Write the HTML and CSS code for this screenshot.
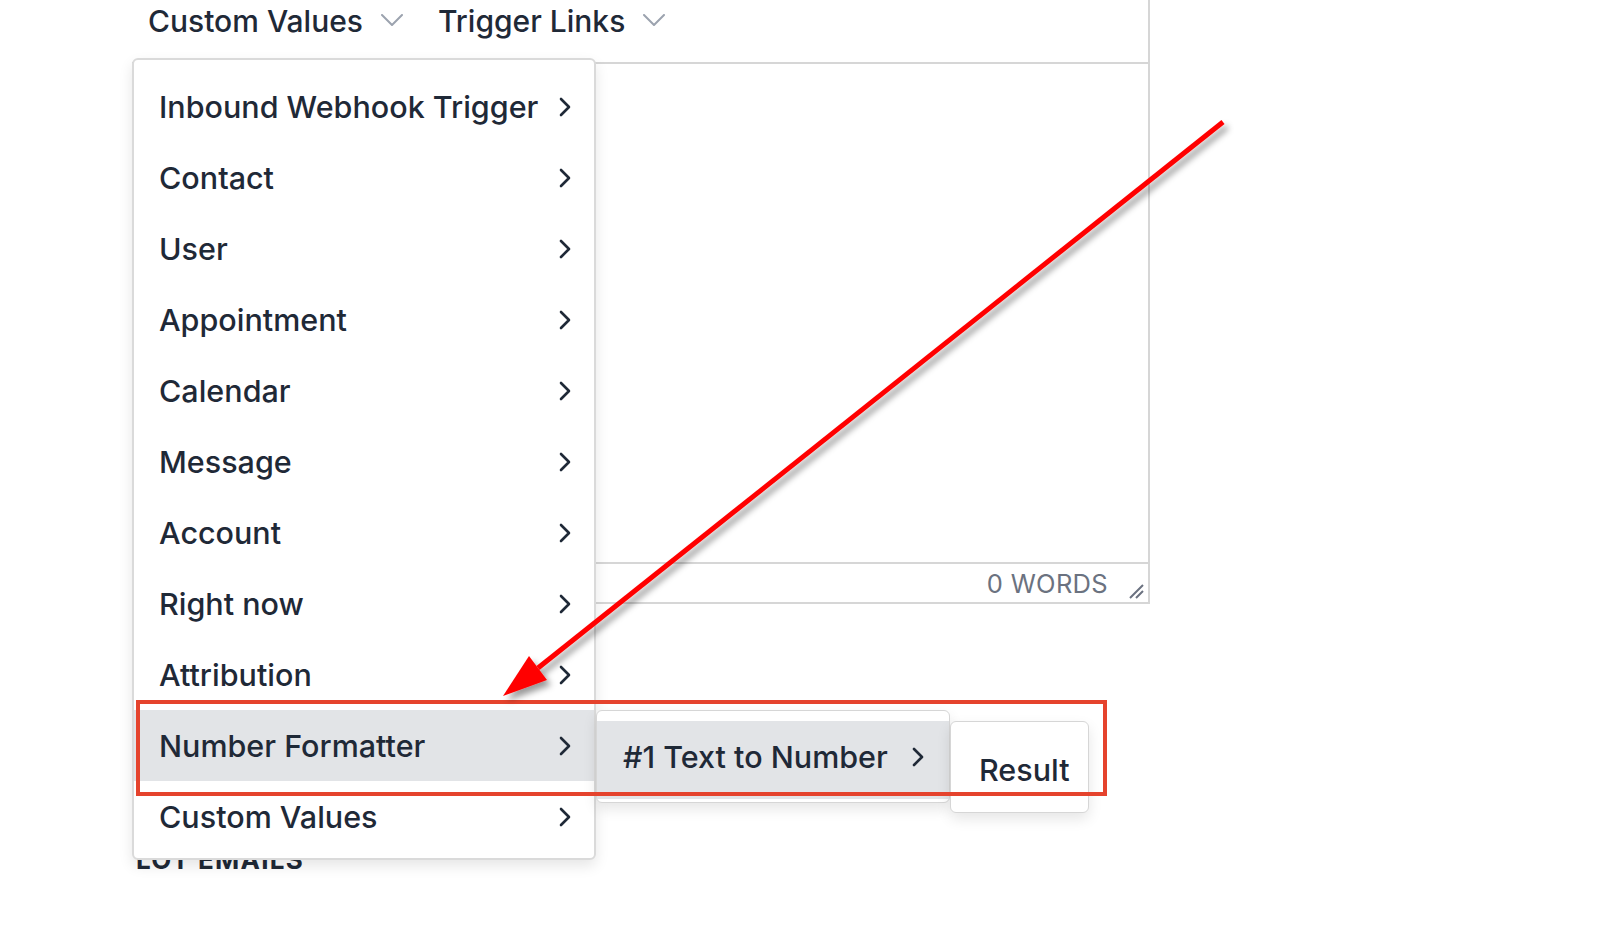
FILE: index.html
```html
<!DOCTYPE html>
<html lang="en">
<head>
<meta charset="utf-8">
<title>Custom Values menu</title>
<link rel="stylesheet" href="styles.css">
</head>
<body>
<div class="page">
  <div class="editor">
    <div class="toolbar">
      <div class="tb-item"><span>Custom Values</span><svg class="caret" viewBox="0 0 22 12"><path d="M1 1 L11 11 L21 1"/></svg></div>
      <div class="tb-item"><span>Trigger Links</span><svg class="caret" viewBox="0 0 22 12"><path d="M1 1 L11 11 L21 1"/></svg></div>
    </div>
    <div class="editor-body"></div>
    <div class="editor-foot">
      <span class="words">0 WORDS</span>
      <svg class="grip" viewBox="0 0 16 16"><path d="M2 15 L15 2 M8 15 L15 8"/></svg>
    </div>
  </div>
  <div class="section-label">LOT EMAILS</div>

  <div class="menu">
    <div class="mi"><span>Inbound Webhook Trigger</span><svg class="chev" viewBox="0 0 14 22"><path d="M3 3 L11 11 L3 19"/></svg></div>
    <div class="mi"><span>Contact</span><svg class="chev" viewBox="0 0 14 22"><path d="M3 3 L11 11 L3 19"/></svg></div>
    <div class="mi"><span>User</span><svg class="chev" viewBox="0 0 14 22"><path d="M3 3 L11 11 L3 19"/></svg></div>
    <div class="mi"><span>Appointment</span><svg class="chev" viewBox="0 0 14 22"><path d="M3 3 L11 11 L3 19"/></svg></div>
    <div class="mi"><span>Calendar</span><svg class="chev" viewBox="0 0 14 22"><path d="M3 3 L11 11 L3 19"/></svg></div>
    <div class="mi"><span>Message</span><svg class="chev" viewBox="0 0 14 22"><path d="M3 3 L11 11 L3 19"/></svg></div>
    <div class="mi"><span>Account</span><svg class="chev" viewBox="0 0 14 22"><path d="M3 3 L11 11 L3 19"/></svg></div>
    <div class="mi"><span>Right now</span><svg class="chev" viewBox="0 0 14 22"><path d="M3 3 L11 11 L3 19"/></svg></div>
    <div class="mi"><span>Attribution</span><svg class="chev" viewBox="0 0 14 22"><path d="M3 3 L11 11 L3 19"/></svg></div>
    <div class="mi active"><span>Number Formatter</span><svg class="chev" viewBox="0 0 14 22"><path d="M3 3 L11 11 L3 19"/></svg></div>
    <div class="mi"><span>Custom Values</span><svg class="chev" viewBox="0 0 14 22"><path d="M3 3 L11 11 L3 19"/></svg></div>
  </div>

  <div class="submenu sub1">
    <div class="si active"><span>#1 Text to Number</span><svg class="chev" viewBox="0 0 14 22"><path d="M3 3 L11 11 L3 19"/></svg></div>
  </div>
  <div class="submenu sub2">
    <div class="si"><span>Result</span></div>
  </div>

  <div class="annot-rect"></div>
  <svg class="arrow" viewBox="0 0 1600 947">
    <defs>
      <filter id="sh" x="-10%" y="-10%" width="130%" height="130%">
        <feDropShadow dx="4" dy="5" stdDeviation="3" flood-color="#000" flood-opacity="0.4"/>
      </filter>
    </defs>
    <g filter="url(#sh)">
      <line x1="1223" y1="122" x2="538" y2="668" stroke="#ff0000" stroke-width="5"/>
      <polygon points="503,696 547,680 529,656" fill="#ff0000"/>
    </g>
  </svg>
</div>
</body>
</html>
```

FILE: styles.css
```css
html, body {
  margin: 0;
  padding: 0;
  background: #ffffff;
}

body {
  font-family: "Inter", "Noto Sans", sans-serif;
  color: #1f2937;
}

.page {
  position: relative;
  width: 1600px;
  height: 947px;
  overflow: hidden;
  background: #ffffff;
}

.editor {
  box-sizing: border-box;
  margin-left: 132px;
  width: 1018px;
  height: 604px;
  border-right: 2px solid #d6d6d6;
  border-bottom: 2px solid #d6d6d6;
  display: flex;
  flex-direction: column;
}

.toolbar {
  box-sizing: border-box;
  height: 64px;
  border-bottom: 2px solid #d6d6d6;
  display: flex;
  align-items: flex-start;
  padding: 3px 0 0 16px;
  gap: 35px;
}

.tb-item {
  display: flex;
  align-items: center;
  gap: 18px;
  font-size: 30px;
  font-weight: 500;
  line-height: 36px;
  color: #1f2937;
}

.caret {
  width: 22px;
  height: 12px;
  margin-top: -3px;
  fill: none;
  stroke: #9ca3af;
  stroke-width: 2;
  stroke-linecap: round;
  stroke-linejoin: round;
}

.editor-body {
  flex: 1;
}

.editor-foot {
  box-sizing: border-box;
  height: 40px;
  border-top: 2px solid #d6d6d6;
  display: flex;
  align-items: center;
  justify-content: flex-end;
  padding-right: 4px;
  gap: 20px;
}

.words {
  font-size: 25.5px;
  color: #6b7280;
  letter-spacing: 0.3px;
}

.grip {
  width: 16px;
  height: 16px;
  align-self: flex-end;
  margin-bottom: 3px;
  fill: none;
  stroke: #6b7280;
  stroke-width: 2;
}

.section-label {
  margin: 241px 0 0 136px;
  font-size: 26px;
  line-height: 30px;
  font-weight: 700;
  letter-spacing: 1.3px;
  color: #1f2937;
}

.menu {
  position: absolute;
  left: 132px;
  top: 58px;
  box-sizing: border-box;
  width: 464px;
  height: 802px;
  padding: 11px 0 10px;
  background: #ffffff;
  border: 2px solid #dadada;
  border-radius: 6px;
  box-shadow: 0 6px 14px rgba(0, 0, 0, 0.10);
}

.mi {
  display: flex;
  align-items: center;
  justify-content: space-between;
  height: 71px;
  padding: 0 22px 0 25px;
  font-size: 30.5px;
  font-weight: 500;
  color: #1f2937;
}

.mi.active {
  background: #e2e4e7;
}

.chev {
  width: 14px;
  height: 22px;
  fill: none;
  stroke: #1f2937;
  stroke-width: 2.6;
  stroke-linecap: round;
  stroke-linejoin: round;
}

.submenu {
  position: absolute;
  box-sizing: border-box;
  background: #ffffff;
  border: 1.5px solid #d6d6d6;
  border-radius: 6px;
  box-shadow: 0 6px 14px rgba(0, 0, 0, 0.10);
}

.sub1 {
  left: 596px;
  top: 710px;
  width: 354px;
  height: 93px;
  padding: 10px 0 3px;
}

.sub2 {
  left: 950px;
  top: 721px;
  width: 139px;
  height: 92px;
  padding: 10px 0 0;
}

.si {
  box-sizing: border-box;
  display: flex;
  align-items: center;
  gap: 23px;
  height: 78px;
  padding: 0 24px 7px 26px;
  font-size: 30.5px;
  font-weight: 500;
  color: #1f2937;
}

.sub2 .si {
  height: 74px;
  padding: 0 0 0 28px;
}

.si.active {
  background: #e2e4e7;
}

.annot-rect {
  position: absolute;
  left: 136px;
  top: 700px;
  width: 971px;
  height: 96px;
  box-sizing: border-box;
  border: 4px solid #e5432d;
}

.arrow {
  position: absolute;
  left: 0;
  top: 0;
  width: 1600px;
  height: 947px;
  pointer-events: none;
}
```
